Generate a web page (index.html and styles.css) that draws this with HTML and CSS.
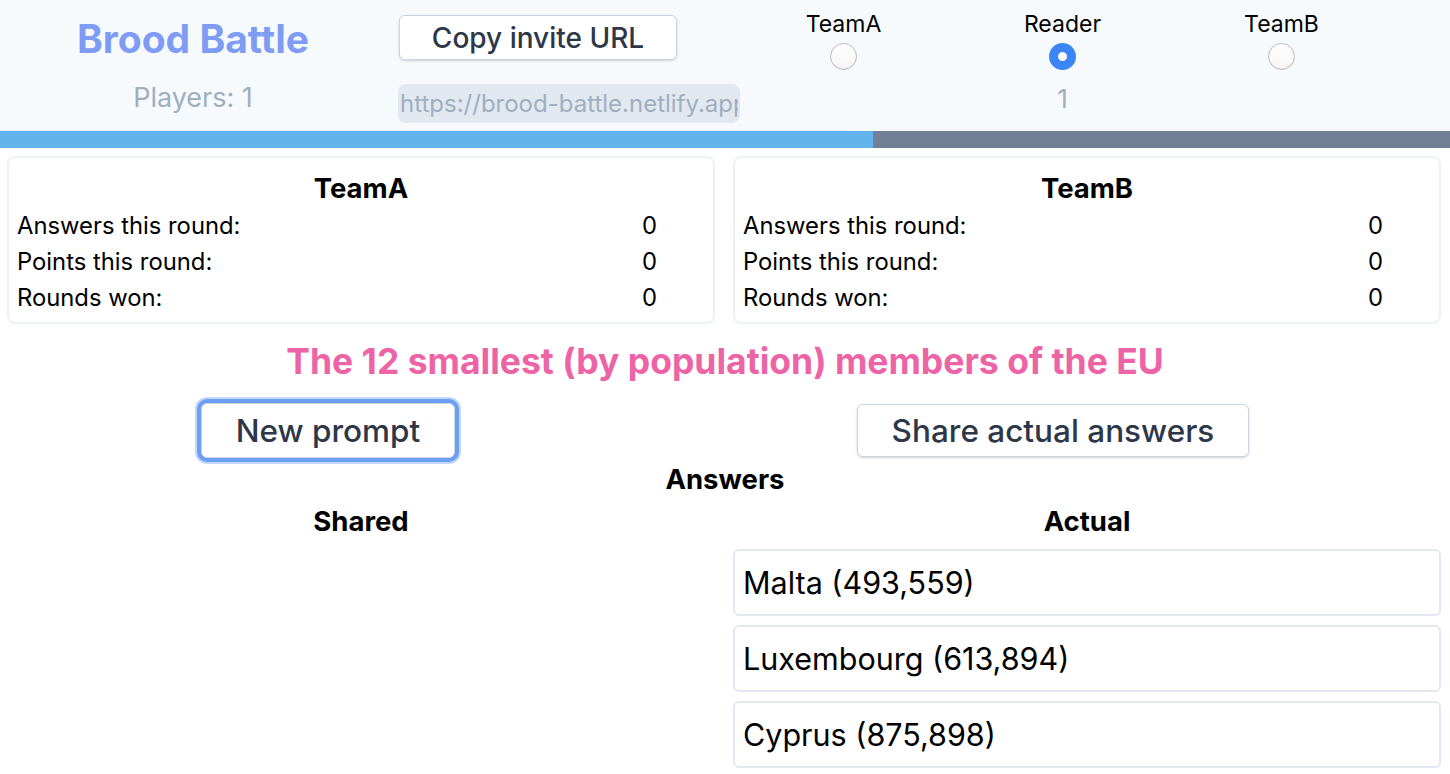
FILE: index.html
```html
<!DOCTYPE html>
<html lang="en">
<head>
<meta charset="utf-8">
<title>Brood Battle</title>
<link rel="stylesheet" href="styles.css">
</head>
<body>
<header class="header">
  <div class="brand-col">
    <h1 class="brand">Brood Battle</h1>
    <div class="players">Players: 1</div>
  </div>
  <div class="invite-col">
    <button class="btn btn-invite">Copy invite URL</button>
    <input class="invite-url" type="text" readonly value="https://brood-battle.netlify.app/?game=abc123">
  </div>
  <div class="roles">
    <label class="role">
      <span class="role-name">TeamA</span>
      <input class="radio" type="radio" name="role">
      <span class="role-count"></span>
    </label>
    <label class="role">
      <span class="role-name">Reader</span>
      <input class="radio" type="radio" name="role" checked>
      <span class="role-count">1</span>
    </label>
    <label class="role">
      <span class="role-name">TeamB</span>
      <input class="radio" type="radio" name="role">
      <span class="role-count"></span>
    </label>
  </div>
</header>

<div class="progress">
  <div class="progress-fill" style="width: 60.2%"></div>
</div>

<section class="two-col teams">
  <div class="card">
    <h2 class="card-title">TeamA</h2>
    <div class="stat"><span>Answers this round:</span><span>0</span></div>
    <div class="stat"><span>Points this round:</span><span>0</span></div>
    <div class="stat"><span>Rounds won:</span><span>0</span></div>
  </div>
  <div class="card">
    <h2 class="card-title">TeamB</h2>
    <div class="stat"><span>Answers this round:</span><span>0</span></div>
    <div class="stat"><span>Points this round:</span><span>0</span></div>
    <div class="stat"><span>Rounds won:</span><span>0</span></div>
  </div>
</section>

<h2 class="prompt">The 12 smallest (by population) members of the EU</h2>

<div class="actions">
  <button class="btn btn-big btn-focus">New prompt</button>
  <button class="btn btn-big">Share actual answers</button>
</div>

<h3 class="answers-title">Answers</h3>

<section class="two-col answers">
  <div class="answers-col">
    <h3 class="col-title">Shared</h3>
  </div>
  <div class="answers-col">
    <h3 class="col-title">Actual</h3>
    <ul class="answer-list">
      <li class="answer">Malta (493,559)</li>
      <li class="answer">Luxembourg (613,894)</li>
      <li class="answer">Cyprus (875,898)</li>
    </ul>
  </div>
</section>
</body>
</html>
```

FILE: styles.css
```css
* {
  box-sizing: border-box;
}

html, body {
  margin: 0;
  padding: 0;
  background: #ffffff;
  font-family: Inter, "Noto Sans", "Liberation Sans", sans-serif;
  color: #000000;
}

h1, h2, h3, ul {
  margin: 0;
  padding: 0;
}

/* Header */
.header {
  display: flex;
  align-items: flex-start;
  background: #f7fafc;
  height: 131px;
  padding-top: 15px;
}

.brand-col {
  width: 386px;
  display: flex;
  flex-direction: column;
  align-items: center;
}

.brand {
  font-size: 39px;
  line-height: 47px;
  font-weight: 700;
  color: #7f9cf5;
}

.players {
  margin-top: 18px;
  font-size: 27px;
  line-height: 36px;
  color: #a0aec0;
}

.invite-col {
  width: 348px;
  padding-left: 12px;
  display: flex;
  flex-direction: column;
  align-items: flex-start;
}

.btn {
  font-family: inherit;
  font-weight: 500;
  color: #2d3748;
  background: #ffffff;
  border: 1px solid #cbd5e0;
  border-radius: 6px;
  box-shadow: 0 1px 3px rgba(0, 0, 0, 0.12), 0 1px 2px rgba(0, 0, 0, 0.06);
  cursor: pointer;
}

.btn-invite {
  font-size: 28px;
  line-height: 36px;
  height: 45px;
  padding: 0 16px;
  width: 278px;
  margin-left: 1px;
}

.invite-url {
  margin-top: 24px;
  width: 342px;
  height: 39px;
  border: none;
  border-radius: 8px;
  background: #e2e8f0;
  color: #a0aec0;
  font-family: inherit;
  font-size: 24px;
  padding: 0 2px;
  outline: none;
}

.roles {
  display: flex;
}

.role {
  width: 219px;
  display: flex;
  flex-direction: column;
  align-items: center;
}

.role-name {
  font-size: 23px;
  line-height: 18px;
  height: 18px;
}

.radio {
  appearance: none;
  -webkit-appearance: none;
  margin: 10px 0 0;
  width: 27px;
  height: 27px;
  border-radius: 50%;
  border: 1px solid #b9b9b9;
  background: linear-gradient(#ffffff, #f6f6f6);
  box-shadow: inset 0 -1px 1px rgba(0, 0, 0, 0.06);
}

.radio:checked {
  border: none;
  background: radial-gradient(circle, #ffffff 0 4px, #3a86f7 5px);
  box-shadow: none;
}

.role-count {
  margin-top: 11px;
  font-size: 26px;
  line-height: 36px;
  height: 36px;
  color: #a0aec0;
}

/* Progress */
.progress {
  height: 17px;
  background: #718096;
}

.progress-fill {
  height: 100%;
  background: #63b3ed;
}

/* Two column layout */
.two-col {
  display: grid;
  grid-template-columns: 1fr 1fr;
  gap: 18px;
  padding: 0 9px 0 7px;
}

.teams {
  padding-top: 8px;
}

.card {
  border: 2px solid #edf2f7;
  border-radius: 8px;
  padding: 12px 8px 6px;
}

.card-title {
  text-align: center;
  font-size: 27.5px;
  line-height: 36px;
  font-weight: 700;
  margin-bottom: 2px;
}

.stat {
  display: grid;
  grid-template-columns: 1fr 63px;
  font-size: 23.8px;
  line-height: 36px;
}

.prompt {
  margin-top: 11px;
  text-align: center;
  font-size: 35.5px;
  line-height: 54px;
  font-weight: 700;
  color: #ed64a6;
}

.actions {
  margin-top: 14px;
  display: flex;
  justify-content: space-around;
  align-items: center;
}

.btn-big {
  font-size: 31.5px;
  line-height: 45px;
  height: 53px;
  padding: 0 34px;
}

.btn-focus {
  height: 55px;
  box-shadow: 0 0 0 4px #6b9ff3, 0 0 0 6px rgba(107, 159, 243, 0.4);
}

.answers-title {
  margin-top: 3px;
  text-align: center;
  font-size: 27.5px;
  line-height: 36px;
  font-weight: 700;
}

.answers {
  margin-top: 6px;
}

.col-title {
  text-align: center;
  font-size: 27.5px;
  line-height: 36px;
  font-weight: 700;
}

.answer-list {
  list-style: none;
  margin-top: 10px;
  display: flex;
  flex-direction: column;
  gap: 9px;
}

.answer {
  height: 67px;
  border: 2px solid #e2e8f0;
  border-radius: 6px;
  padding: 0 8px;
  display: flex;
  align-items: center;
  font-size: 30.5px;
}
```
